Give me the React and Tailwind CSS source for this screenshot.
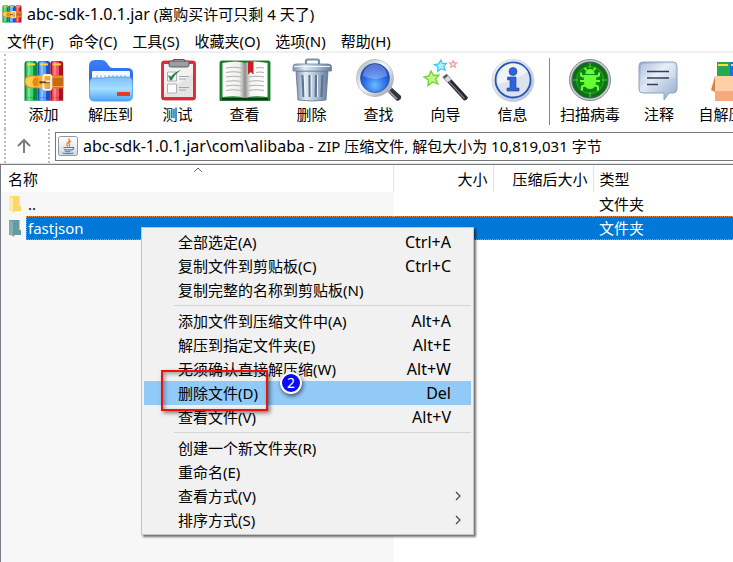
import React from 'react';

function BooksArt() {
  const books = [
    { x: 1, a: '#0d8a3c', b: '#3fd56b' },
    { x: 14.3, a: '#1f4fc4', b: '#58a2ff' },
    { x: 27.6, a: '#a81324', b: '#f5505c' },
  ];
  return (
    <>
      {books.map((b, i) => (
        <g key={i}>
          <path d={`M${b.x} 4 q0 -3 3 -3 h7.3 q3 0 3 3 v38 h-13.3 z`} fill={b.a} />
          <rect x={b.x + 2} y="1.5" width="7" height="40.5" fill={b.b} />
          <rect x={b.x + 3.5} y="1.5" width="2.5" height="40.5" fill="#fff" opacity="0.3" />
          <rect x={b.x + 2.5} y="3.5" width="8.5" height="2" fill="#ffd83a" />
          <rect x={b.x + 2.5} y="38" width="8.5" height="1.5" fill="#000" opacity="0.15" />
        </g>
      ))}
      <path d="M1 22 q0 -6 6 -6 h34 v13 h-34 q-6 0 -6 -7z" fill="#e58a17" />
      <path d="M2 21 q1 -4 5 -4 h5 q-5 5 -1 11 h-4 q-5 -1 -5 -7z" fill="#ffd04f" />
      <path d="M15 16 h12 v13 h-12z" fill="#f7a92b" />
      <path d="M30 16 h11 v13 h-11z" fill="#c96a10" />
      <path d="M8 17.5 h33 M8 27.5 h33" stroke="#ffb648" strokeWidth="1" />
      <circle cx="17.5" cy="23" r="1.2" fill="#5c2c08" />
      <rect x="20.5" y="15.5" width="8" height="15" rx="2" fill="none" stroke="#fff1d2" strokeWidth="2.2" />
      <path d="M18 23 h9" stroke="#6e3b18" strokeWidth="1.8" />
      <path d="M23 22 h6" stroke="#e8e5e1" strokeWidth="2" />
    </>
  );
}

function Icon({ children }) {
  return (
    <svg viewBox="0 0 44 44" className="h-11 w-11 shrink-0" aria-hidden="true">
      {children}
    </svg>
  );
}

const addIcon = (
  <Icon><g transform="translate(1.500 2) scale(0.970)"><BooksArt /></g></Icon>
);

const extractIcon = (
  <Icon>
    <defs>
      <linearGradient id="fb" x1="0" y1="0" x2="0" y2="1"><stop offset="0" stopColor="#3a80f6" /><stop offset="1" stopColor="#2c62e6" /></linearGradient>
      <linearGradient id="ff" x1="0" y1="0" x2="0" y2="1"><stop offset="0" stopColor="#7cbffc" /><stop offset="0.5" stopColor="#a6defd" /><stop offset="1" stopColor="#4ba5f8" /></linearGradient>
    </defs>
    <path d="M0 8 q0 -6 6 -6 h7 q3 0 5 3 l2 3 q1 2 4 2 h14 q6 0 6 5 v10 h-44z" fill="url(#fb)" />
    <rect x="3" y="13" width="38" height="16" rx="1" fill="#f4f7fc" />
    <path d="M8 17 v4 M12 17 v4 M16 17 v4 M20 17 v4 M24 17 v4 M28 17 v4 M32 17 v4 M36 17 v4" stroke="#b4bfcf" strokeWidth="1.3" />
    <path d="M0.500 24 q0 -4 4 -4 h10 q3 0 5 -1 h20 q4 0 4 4 v15 q0 5 -5 5 h-33 q-5 0 -5 -5z" fill="url(#ff)" stroke="#4c92f0" strokeWidth="0.8" />
    <rect x="28" y="34" width="13" height="4" rx="0.5" fill="#e33b1f" />
  </Icon>
);

const testIcon = (
  <Icon>
    <rect x="5.5" y="3" width="34" height="39" rx="2.5" fill="#e22b36" stroke="#b3202a" strokeWidth="0.7" />
    <path d="M8 6 h29 v33 h-29z" fill="#f2f2f2" />
    <path d="M8 36 l29 -20 v23 h-29z" fill="#dedede" opacity="0.7" />
    <path d="M13 3 h20 v4 q0 2 -2 2 h-16 q-2 0 -2 -2z" fill="#9b9ea2" stroke="#45494d" strokeWidth="0.8" />
    <path d="M17 3.5 q0 -2 2 -2 h8 q2 0 2 2" fill="none" stroke="#4f5357" strokeWidth="1.2" />
    <path d="M11.5 14 h9 v9 h-9z M11.5 26 h9 v9 h-9z" fill="#fafafa" stroke="#b0b0b0" />
    <path d="M12 17 l3 1.5 q4 -5 10 -6.5 q-6 4 -9 10 q-1 1 -2 0z" fill="#21873e" />
    <path d="M23 18.5 h10 M23 21 h7 M23 29.5 h10 M23 32 h7" stroke="#a5a5a5" />
  </Icon>
);

const viewIcon = (
  <svg viewBox="0 0 52 44" className="h-11 w-13 shrink-0" aria-hidden="true">
    <defs>
      <linearGradient id="pg" x1="0" y1="0" x2="1" y2="0"><stop offset="0" stopColor="#fff" /><stop offset="0.75" stopColor="#eeeeec" /><stop offset="1" stopColor="#8e8e8a" /></linearGradient>
      <linearGradient id="pr" x1="0" y1="0" x2="1" y2="0"><stop offset="0" stopColor="#8e8e8a" /><stop offset="0.25" stopColor="#f4f4f2" /><stop offset="1" stopColor="#fff" /></linearGradient>
    </defs>
    <path d="M1 4.500 q0 -1.500 1.500 -1.500 h47 q1.500 0 1.500 1.500 v38 h-50z" fill="#168b2d" stroke="#0c611c" strokeWidth="0.8" />
    <path d="M3 40 h46 v2 h-46z" fill="#073d10" />
    <path d="M3.500 5 q15 -3 22.500 0 v35 q-8 -3 -22.500 -1z" fill="url(#pg)" />
    <path d="M48.500 5 q-15 -3 -22.500 0 v35 q8 -3 22.500 -1z" fill="url(#pr)" />
    <path d="M7 10 q8 -1.500 15 0 M7 14.500 q8 -1.500 15 0 M7 19 q8 -1.500 15 0 M7 23.500 q8 -1.500 15 0 M7 28 q8 -1.500 15 0 M7 32.500 q8 -1.500 15 0 M30 19 q8 -1.500 15 0 M30 23.500 q8 -1.500 15 0 M30 28 q8 -1.500 15 0 M30 32.500 q8 -1.500 15 0 M37 10 q4 -1 8 0 M37 14.500 q4 -1 8 0" fill="none" stroke="#b1b1af" strokeWidth="1.100" />
    <path d="M29 3.500 h5.500 v13 l-2.700 -2.500 l-2.800 2.500z" fill="#c91d25" />
  </svg>
);

const deleteIcon = (
  <Icon>
    <defs>
      <linearGradient id="tb" x1="0" y1="0" x2="1" y2="0"><stop offset="0" stopColor="#7e93ae" /><stop offset="0.3" stopColor="#e1e9f4" /><stop offset="0.6" stopColor="#b3c4d9" /><stop offset="1" stopColor="#647b99" /></linearGradient>
    </defs>
    <path d="M16 7 v-4 q0 -1.500 1.500 -1.500 h10 q1.500 0 1.500 1.500 v4" fill="none" stroke="#7b8fa8" strokeWidth="2.200" />
    <path d="M6 13 h32 l-2 29 q-13 2 -28 0z" fill="url(#tb)" stroke="#5e738e" strokeWidth="0.800" />
    <path d="M12.500 17 l1 22 M19.500 17 l0.300 22 M26 17 l-0.300 22 M32.500 17 l-1 22" stroke="#60738d" strokeWidth="2.200" />
    <path d="M14.200 17 l1 22 M21.200 17 v22 M27.500 17 v22" stroke="#f6f9fd" strokeWidth="0.900" />
    <path d="M3 9 q0 -3 3 -3 h32 q3.500 0 3.500 3 v4 h-38.500z" fill="url(#tb)" stroke="#6c8099" strokeWidth="0.800" />
    <path d="M4 8.500 h36" stroke="#f0f5fb" strokeWidth="1" />
  </Icon>
);

const findIcon = (
  <svg viewBox="0 0 48 44" className="h-11 w-12 shrink-0" aria-hidden="true">
    <defs>
      <radialGradient id="ln" cx="0.500" cy="0.750" r="0.800"><stop offset="0" stopColor="#66bdff" /><stop offset="0.500" stopColor="#2a69e8" /><stop offset="1" stopColor="#1536a8" /></radialGradient>
      <linearGradient id="rg" x1="0" y1="0" x2="1" y2="1"><stop offset="0" stopColor="#a2abb5" /><stop offset="0.450" stopColor="#f7fafc" /><stop offset="1" stopColor="#8995a2" /></linearGradient>
    </defs>
    <path d="M31 32 l4 -4 l11 10 q1 4 -4 5z" fill="#30343b" />
    <path d="M32.500 31.500 l9.500 9.500" stroke="#9aa2ad" strokeWidth="1.500" />
    <path d="M29 31 l4 -4 l4 3 l-4.500 4.500z" fill="#c5ccd4" />
    <circle cx="20" cy="20" r="18.500" fill="url(#rg)" stroke="#a7b1bc" strokeWidth="0.700" />
    <circle cx="20" cy="20" r="14.500" fill="url(#ln)" stroke="#2c479b" strokeWidth="0.700" />
    <path d="M8 18 a12 12 0 0 1 24 0 q-12 6 -24 0z" fill="#fff" opacity="0.270" />
  </svg>
);

const wizardIcon = (
  <svg viewBox="0 0 46 44" className="h-11 w-12 shrink-0" aria-hidden="true">
    <path d="M20 19.500 l4 -3 l21 23 q-1 3 -4 3z" fill="#25272b" />
    <path d="M21.500 18.500 l20 22" stroke="#777c82" strokeWidth="1.200" />
    <path d="M19.500 19 l4 -3 l5 5.500 l-4 3z" fill="#d9dcdf" stroke="#8c9196" strokeWidth="0.600" />
    <path d="M20 19 l3.500 -2.800 l1.500 1.500 l-3.500 3z" fill="#555" />
    <path d="M8 13 l2.500 4.500 l5.500 -0.500 l-3.500 4 l2.500 5 l-5.500 -2 l-4.500 3.500 l0.500 -5.500 l-4.500 -3 l5 -1z" fill="#c4f58a" stroke="#69d629" strokeWidth="1.300" />
    <path d="M18 2 l1.300 3.500 l4 -0.200 l-2.600 3 l1.500 4 l-4 -1.500 l-3.500 2.500 l0.300 -4.200 l-3.600 -2.300 l4.200 -0.900z" fill="#b0f0ff" stroke="#33c7ee" strokeWidth="1.200" />
    <path d="M30 2.500 l1 2.300 l2.800 0 l-2 1.800 l0.800 2.600 l-2.500 -1.300 l-2.300 1.500 l0.500 -2.700 l-2 -1.700 l2.700 -0.300z" fill="#ffe0e0" stroke="#f49b9b" strokeWidth="1.100" />
  </svg>
);

const infoIcon = (
  <Icon>
    <defs><linearGradient id="ir" x1="0" y1="0" x2="1" y2="1"><stop offset="0" stopColor="#f4f8fc" /><stop offset="1" stopColor="#b3bfcd" /></linearGradient></defs>
    <circle cx="22" cy="22.500" r="21" fill="url(#ir)" stroke="#c6d0da" strokeWidth="0.800" />
    <circle cx="22" cy="22" r="17.500" fill="#dde3ec" stroke="#2855bd" strokeWidth="1.800" />
    <path d="M7 26 q15 -3 30 -12 a16 16 0 0 0 -30 4z" fill="#fff" opacity="0.600" />
    <circle cx="22" cy="13.500" r="4" fill="#2f63d8" stroke="#1f439f" strokeWidth="0.600" />
    <path d="M16.500 19 h8.500 v11 h3 v3 h-12 v-3 h3 v-8 h-2.500z" fill="#2f63d8" stroke="#1f439f" strokeWidth="0.600" />
  </Icon>
);

const virusIcon = (
  <Icon>
    <defs><radialGradient id="vg"><stop offset="0" stopColor="#1fa01b" /><stop offset="1" stopColor="#0a6a12" /></radialGradient></defs>
    <circle cx="22" cy="22" r="20.500" fill="#c6ccd0" stroke="#858e94" />
    <circle cx="22" cy="22" r="18" fill="url(#vg)" stroke="#51605a" />
    <circle cx="22" cy="22" r="13.500" fill="none" stroke="#32bb2c" strokeWidth="0.800" />
    <path d="M22 5 v5 M22 34 v5 M5 22 h5 M34 22 h5" stroke="#3ed335" strokeWidth="1.200" />
    <path d="M17.500 16 q0 -5 4.500 -5 t4.500 5 z" fill="#66ff35" />
    <path d="M16 17 h12 v6 q0 8 -6 8 t-6 -8z" fill="#66ff35" />
    <path d="M18.500 12 l-2 -2 M25.500 12 l2 -2 M17 19 l-4 -1.500 v-3 M27 19 l4 -1.500 v-3 M17 23 h-5 M27 23 h5 M18 27 l-4 1.500 v4 M26 27 l4 1.500 v4" fill="none" stroke="#66ff35" strokeWidth="2" />
  </Icon>
);

const commentIcon = (
  <Icon>
    <defs><linearGradient id="cm" x1="0" y1="0" x2="1" y2="1"><stop offset="0" stopColor="#8fa8cc" /><stop offset="0.400" stopColor="#dfe9f6" /><stop offset="1" stopColor="#92a9c8" /></linearGradient></defs>
    <path d="M6 4 h30 q4 0 4 4 v23 q0 4 -4 4 h-4 l-5 7 v-7 h-21 q-4 0 -4 -4 v-23 q0 -4 4 -4z" fill="url(#cm)" stroke="#8aa1c0" />
    <path d="M6 6 h29 q3 0 3 3 v11 q-17 -3 -34 4 v-15 q0 -3 2 -3z" fill="#fff" opacity="0.250" />
    <path d="M10 13.500 h22 M10 20 h22 M10 26.500 h11" stroke="#334058" strokeWidth="1.500" />
  </Icon>
);

const sfxIcon = (
  <svg viewBox="0 0 50 44" className="h-11 w-[50px] shrink-0" aria-hidden="true">
    <path d="M6 4 h13 v20 h-13z" fill="#20ad51" />
    <path d="M19 4 h13 v20 h-13z" fill="#256de2" />
    <path d="M32 4 h12 v20 h-12z" fill="#d32839" />
    <path d="M7 7 h10 M20 7 h10 M33 7 h9" stroke="#ffdf3f" strokeWidth="2" />
    <path d="M4 19 h42 v24 h-42z" fill="#f6a97c" />
    <path d="M4 18 h42 v15 h-42z" fill="#ffcfa6" />
    <path d="M4 18 l-4 14 l4 2z M46 18 l4 14 l-4 2z" fill="#d98350" />
  </svg>
);

const tools = [
  { label: '添加', icon: addIcon, w: 'w-[67px]' },
  { label: '解压到', icon: extractIcon, w: 'w-[67px]' },
  { label: '测试', icon: testIcon, w: 'w-[67px]' },
  { label: '查看', icon: viewIcon, w: 'w-[67px]' },
  { label: '删除', icon: deleteIcon, w: 'w-[67px]' },
  { label: '查找', icon: findIcon, w: 'w-[67px]' },
  { label: '向导', icon: wizardIcon, w: 'w-[67px]' },
  { label: '信息', icon: infoIcon, w: 'w-[67px]' },
  { label: '扫描病毒', icon: virusIcon, w: 'w-20', divided: true },
  { label: '注释', icon: commentIcon, w: 'w-[58px]' },
  { label: '自解压格式', icon: sfxIcon, w: 'w-24' },
];

const menus = ['文件(F)', '命令(C)', '工具(S)', '收藏夹(O)', '选项(N)', '帮助(H)'];

const contextGroups = [
  [
    { label: '全部选定(A)', keys: 'Ctrl+A' },
    { label: '复制文件到剪贴板(C)', keys: 'Ctrl+C' },
    { label: '复制完整的名称到剪贴板(N)' },
  ],
  [
    { label: '添加文件到压缩文件中(A)', keys: 'Alt+A' },
    { label: '解压到指定文件夹(E)', keys: 'Alt+E' },
    { label: '无须确认直接解压缩(W)', keys: 'Alt+W' },
    { label: '删除文件(D)', keys: 'Del', active: true },
    { label: '查看文件(V)', keys: 'Alt+V' },
  ],
  [
    { label: '创建一个新文件夹(R)' },
    { label: '重命名(E)' },
    { label: '查看方式(V)', sub: true },
    { label: '排序方式(S)', sub: true },
  ],
];

function FolderIcon({ selected }) {
  return (
    <svg viewBox="0 0 14 18" className="h-[18px] w-3.5 shrink-0" aria-hidden="true">
      <path d="M1 1 h10.500 v10 h1.500 v5 h-12z" fill={selected ? '#669d9f' : '#ffd76b'} />
      <path d="M1 1 l5 2.500 v14 l-5 -2z" fill={selected ? '#7eb0ac' : '#ffe9a6'} />
      <path d="M6 3.500 v14" stroke={selected ? '#4c8390' : '#f2c14e'} strokeWidth="0.700" />
    </svg>
  );
}

function JavaIcon() {
  return (
    <svg viewBox="0 0 20 20" className="h-5 w-5 shrink-0" aria-hidden="true">
      <defs><linearGradient id="jv" x1="0" y1="0" x2="0" y2="1"><stop offset="0" stopColor="#fff" /><stop offset="1" stopColor="#cfdbe6" /></linearGradient></defs>
      <rect x="0.500" y="0.500" width="19" height="19" rx="2" fill="url(#jv)" stroke="#8a9aaa" />
      <path d="M10.500 2.500 q2 2 -0.500 4 t0 4 M13 5 q-3 2 -1.500 3.500 q0.500 1 -0.500 2" fill="none" stroke="#ec7a2c" strokeWidth="1.200" />
      <path d="M5.500 11.500 h8 M6 13.500 q4 1 7 0 M7 15.500 q3 0.800 5.500 0 M13.500 11.500 q3 -0.500 2 1.200 q-1 1.300 -2.500 1.500 M4.500 17 q6 1.500 11 0" fill="none" stroke="#557a9e" strokeWidth="1.100" />
    </svg>
  );
}

function Chevron() {
  return (
    <svg viewBox="0 0 6 10" className="h-2.5 w-1.5" aria-hidden="true">
      <path d="M1 1 L5 5 L1 9" fill="none" stroke="#444" strokeWidth="1.200" />
    </svg>
  );
}

function ContextMenu() {
  return (
    <div role="menu" className="absolute top-[227px] left-[141px] w-[333px] border border-[#c4c4c4] bg-[#f1f1f1] p-0.5 shadow-[2px_2px_2px_rgba(0,0,0,0.55)]">
      {contextGroups.map((group, i) => (
        <div key={i}>
          {i > 0 && <div role="separator" className="ml-[30px] flex h-[7px] items-center"><div className="h-px w-full bg-[#d5d5d5]" /></div>}
          {group.map((item) => (
            <button
              key={item.label}
              role="menuitem"
              className={`flex h-6 w-full items-center justify-between pr-5 pl-[34px] ${item.active ? 'bg-[#91c9f7]' : ''}`}
            >
              <span>{item.label}</span>
              {item.keys && <span className="text-base leading-6">{item.keys}</span>}
              {item.sub && <span className="-mr-2.5"><Chevron /></span>}
            </button>
          ))}
        </div>
      ))}
    </div>
  );
}

export default function App() {
  return (
    <div className="relative flex min-h-screen flex-col overflow-hidden bg-white font-['Noto_Sans','Noto_Sans_CJK_SC',sans-serif] text-[15px] leading-6 whitespace-nowrap text-black">
      <header className="flex h-[27px] items-center gap-[5px] pl-0.5">
        <svg viewBox="0 0 42 43" preserveAspectRatio="none" className="h-[18px] w-5 shrink-0" aria-hidden="true"><BooksArt /></svg>
        <h1><span className="text-base leading-6">abc-sdk-1.0.1.jar</span> (离购买许可只剩 4 天了)</h1>
      </header>
      <nav className="flex h-[26px] items-center gap-[15px] border-b-2 border-[#f0f0f0] pt-[3px] pl-[7px]">
        {menus.map((m) => <button key={m}>{m}</button>)}
      </nav>
      <div className="flex h-[76px] overflow-hidden pt-px pl-1">
        <div className="mr-1 w-0.5 shrink-0 border-l-2 border-dotted border-[#bdbdbd]" />
        {tools.map((t) => (
          <React.Fragment key={t.label}>
            {t.divided && (
              <div className="flex shrink-0 pt-1 pb-1 pl-[3px]"><div className="w-px bg-[#868686]" /></div>
            )}
            <button className={`flex shrink-0 flex-col items-center pt-1 ${t.w}`}>
              {t.icon}
              <span>{t.label}</span>
            </button>
          </React.Fragment>
        ))}
      </div>
      <div className="flex h-[35px] items-center border-b border-[#e3e3e3] pl-1">
        <div className="h-full w-0.5 border-l-2 border-dotted border-[#bdbdbd]" />
        <button aria-label="向上" className="flex w-[42px] shrink-0 justify-center pr-1.5">
          <svg viewBox="0 0 16 16" className="h-4 w-4" aria-hidden="true">
            <path d="M8 15 V2 M2 8 L8 2 L14 8" fill="none" stroke="#7d7d7d" strokeWidth="2" />
          </svg>
        </button>
        <div className="mr-[5px] h-full w-0.5 border-l-2 border-dotted border-[#bdbdbd]" />
        <div className="flex h-[29px] flex-1 items-center border border-r-0 border-[#777] pl-0.5">
          <JavaIcon />
          <input
            id="path"
            aria-label="地址"
            readOnly
            value="abc-sdk-1.0.1.jar\com\alibaba"
            className="field-sizing-content ml-[5px] bg-transparent text-base leading-6 outline-none"
          />
          <label htmlFor="path" className="whitespace-pre"> - ZIP 压缩文件, 解包大小为 10,819,031 字节</label>
        </div>
      </div>
      <main className="flex-1 border-t border-l border-[#777b85] bg-[linear-gradient(to_right,#f7f7f7_393px,#fff_393px)]">
        <table className="w-full table-fixed border-collapse">
          <colgroup>
            <col className="w-[392px]" />
            <col className="w-[100px]" />
            <col className="w-[100px]" />
            <col />
          </colgroup>
          <thead>
            <tr className="h-[27px] bg-white text-left">
              <th className="relative border-r border-[#e3e3e3] pl-[7px] font-normal">
                名称
                <svg viewBox="0 0 10 6" className="absolute top-0.5 left-48 h-1.5 w-2.5" aria-hidden="true">
                  <path d="M1 5 L5 1 L9 5" fill="none" stroke="#666" />
                </svg>
              </th>
              <th className="border-r border-[#e3e3e3] pr-[5px] text-right font-normal">大小</th>
              <th className="border-r border-[#e3e3e3] pr-[5px] text-right font-normal">压缩后大小</th>
              <th className="pl-1.5 font-normal">类型</th>
            </tr>
          </thead>
          <tbody>
            <tr className="h-6">
              <td className="p-0"><div className="flex h-6 items-center gap-1.5 pl-[7px]"><FolderIcon />..</div></td>
              <td />
              <td />
              <td className="pl-1.5">文件夹</td>
            </tr>
            <tr className="h-6 text-white">
              <td className="p-0">
                <div className="flex h-6 items-center gap-1 bg-[#f7f7f7] pl-[7px]">
                  <FolderIcon selected />
                  <span className="flex h-6 flex-1 items-center border-y border-l border-dotted border-[#e68a45] bg-[#0078d7] pl-px">fastjson</span>
                </div>
              </td>
              <td colSpan={2} className="p-0"><div className="h-6 border-y border-dotted border-[#e68a45] bg-[#0078d7]" /></td>
              <td className="p-0"><div className="flex h-6 items-center border-y border-dotted border-[#e68a45] bg-[#0078d7] pl-1.5">文件夹</div></td>
            </tr>
          </tbody>
        </table>
      </main>
      <ContextMenu />
      <div className="pointer-events-none absolute top-[370px] left-[161px] h-[41px] w-[107px] border-2 border-[#f00f0f] shadow-[2px_2px_4px_rgba(0,0,0,0.5),inset_2px_2px_4px_rgba(0,0,0,0.35)]" />
      <div className="absolute top-[372px] left-[280px] flex h-[22px] w-[22px] items-center justify-center rounded-full border-2 border-white bg-[#0a0af5] text-sm leading-4 text-white shadow-[1px_2px_4px_rgba(0,0,0,0.6)]">2</div>
    </div>
  );
}
